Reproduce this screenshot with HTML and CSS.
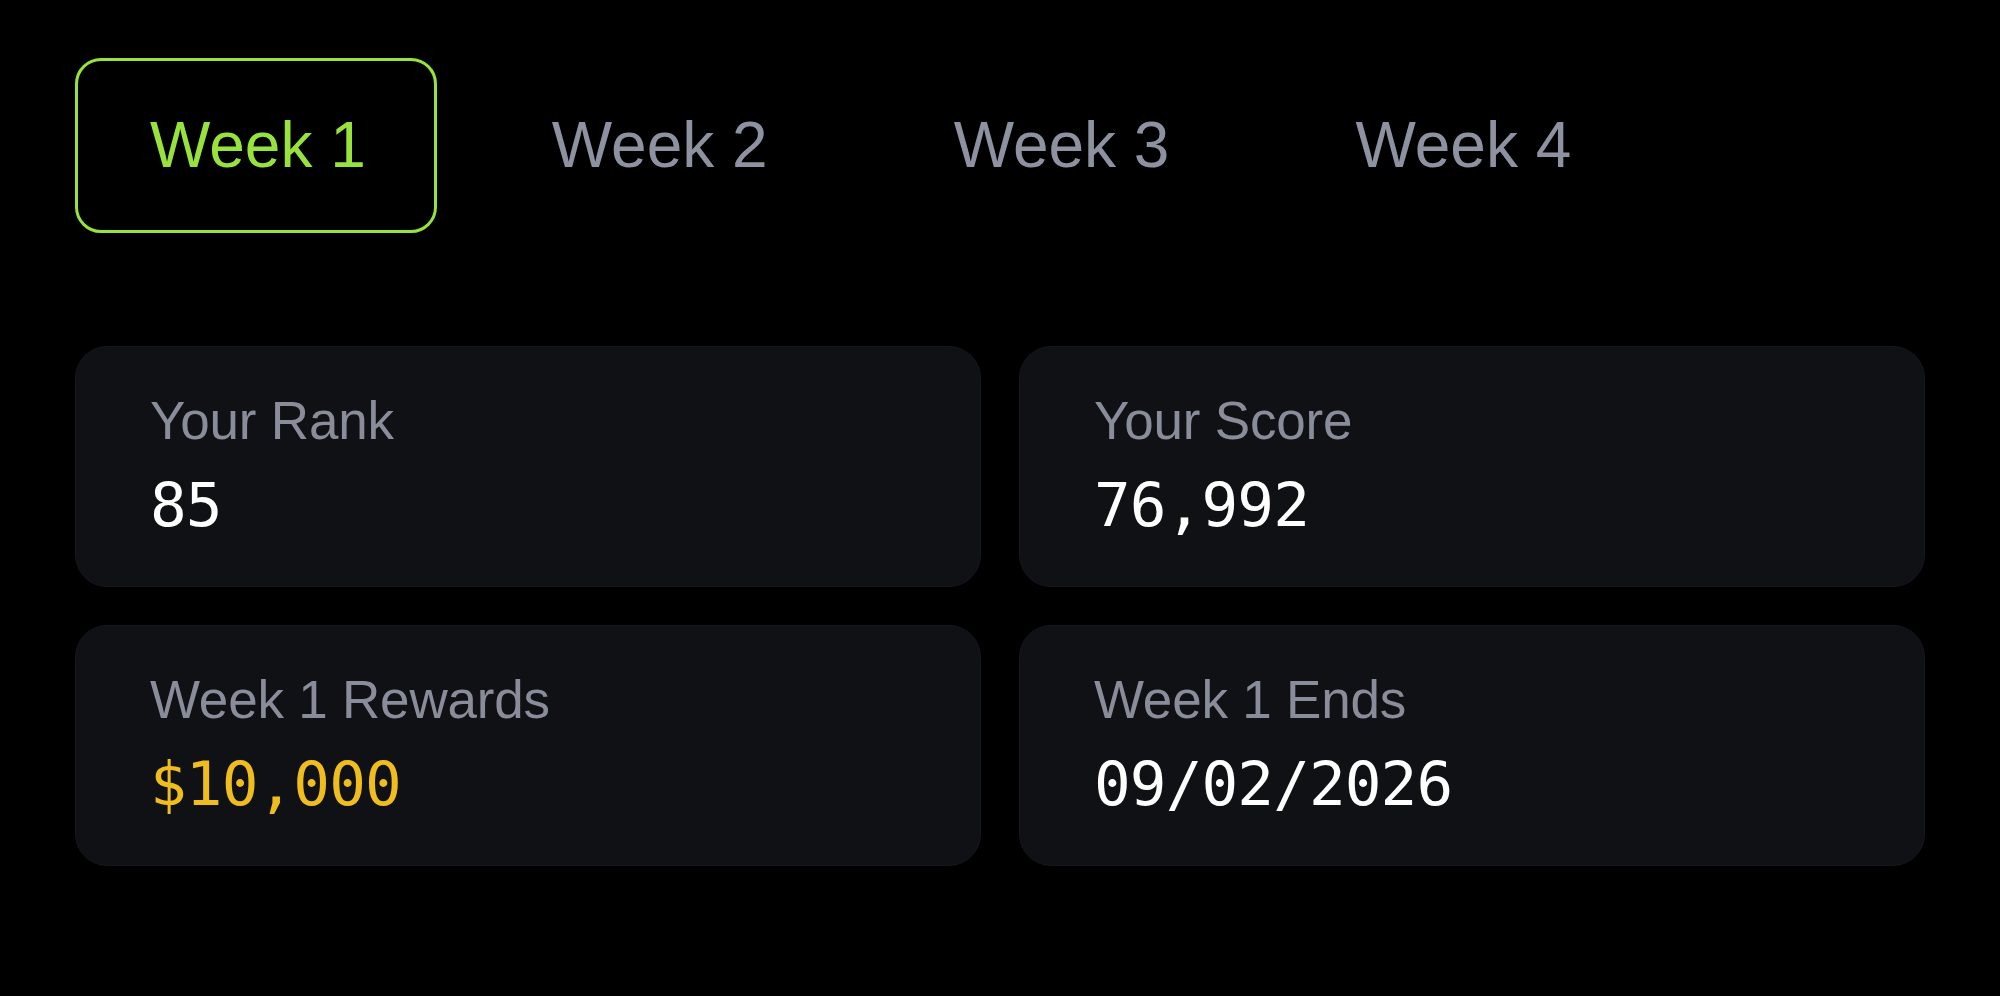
FILE: index.html
```html
<!DOCTYPE html>
<html lang="en">
<head>
<meta charset="utf-8">
<title>Weekly Leaderboard</title>
<link rel="stylesheet" href="styles.css">
</head>
<body>
<main class="page">
  <nav class="tabs">
    <button class="tab tab-active">Week 1</button>
    <button class="tab">Week 2</button>
    <button class="tab">Week 3</button>
    <button class="tab">Week 4</button>
  </nav>
  <section class="stats">
    <div class="card">
      <div class="label">Your Rank</div>
      <div class="value">85</div>
    </div>
    <div class="card">
      <div class="label">Your Score</div>
      <div class="value">76,992</div>
    </div>
    <div class="card">
      <div class="label">Week 1 Rewards</div>
      <div class="value value-gold">$10,000</div>
    </div>
    <div class="card">
      <div class="label">Week 1 Ends</div>
      <div class="value">09/02/2026</div>
    </div>
  </section>
</main>
</body>
</html>
```

FILE: styles.css
```css
* { box-sizing: border-box; }

html, body {
  margin: 0;
  padding: 0;
  background: #000;
  height: 100%;
}

body {
  font-family: "Liberation Sans", Arial, sans-serif;
  color: #fff;
}

.page {
  padding: 58px 75px 0 75px;
}

.tabs {
  display: flex;
  gap: 40px;
  align-items: center;
}

.tab {
  font-family: "Liberation Sans", Arial, sans-serif;
  font-size: 64px;
  line-height: 76px;
  letter-spacing: 0;
  color: #8d91a0;
  background: transparent;
  border: 3px solid transparent;
  border-radius: 26px;
  padding: 46px 68px 47px 72px;
  cursor: pointer;
}

.tab-active {
  color: #97e23c;
  border-color: #97e23c;
}

.stats {
  margin-top: 113px;
  display: grid;
  grid-template-columns: 1fr 1fr;
  gap: 38px;
}

.card {
  background: #101115;
  border: 1px solid #16171c;
  border-radius: 32px;
  height: 241px;
  padding: 43px 74px 0 74px;
}

.label {
  font-size: 53px;
  line-height: 62px;
  color: #898d9a;
  letter-spacing: -0.2px;
}

.value {
  margin-top: 16px;
  font-family: "DejaVu Sans Mono", "Liberation Mono", monospace;
  font-size: 61px;
  line-height: 74px;
  color: #ffffff;
  letter-spacing: -0.9px;
}

.value-gold {
  color: #efbd1d;
}
```
